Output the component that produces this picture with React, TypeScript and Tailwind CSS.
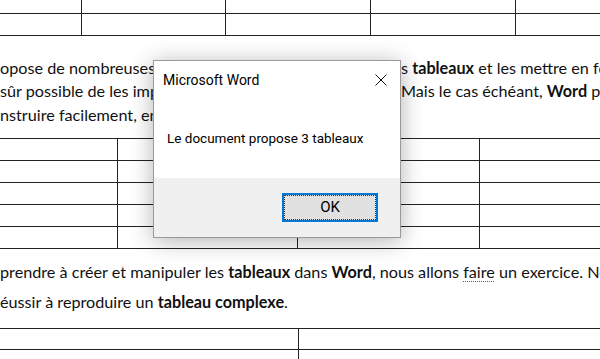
import React from "react";

function Line({ left, right, rightStart = 401 }: { left: React.ReactNode; right?: React.ReactNode; rightStart?: number }) {
  return (
    <div className="flex h-[23.5px] items-center whitespace-nowrap">
      <div className="overflow-hidden" style={{ width: rightStart }}>{left}</div>
      <div className="flex-1 overflow-hidden">{right}</div>
    </div>
  );
}

export default function App() {
  const cell = "border-r border-[#222]";
  return (
    <div className="relative h-[359px] w-[600px] overflow-hidden bg-white font-['Lato',sans-serif] text-[16.2px] text-[#111]">
      {/* top table */}
      <div className="flex flex-col">
        <div className="grid h-[14px] grid-cols-[82px_144px_145px_145px_1fr] border-b border-[#222]">
          <div className={cell} />
          <div className={cell} />
          <div className={cell} />
          <div className={cell} />
          <div />
        </div>
        <div className="grid h-[22px] grid-cols-[82px_144px_145px_145px_1fr] border-b border-[#222]">
          <div className={cell} />
          <div className={cell} />
          <div className={cell} />
          <div className={cell} />
          <div />
        </div>
      </div>

      {/* paragraph 1 */}
      <div className="mt-[20px] flex flex-col">
        <Line
          left={<span>opose de nombreuses fonctionnalités pour créer des</span>}
          right={<span>s <b>tableaux</b> et les mettre en forme</span>}
        />
        <Line
          left={<span>sûr possible de les importer depuis Excel.</span>}
          right={<span>Mais le cas échéant, <b>Word</b> permet</span>}
        />
        <Line left={<span>nstruire facilement, en quelques clics.</span>} />
      </div>

      {/* middle table */}
      <div className="mt-[11px] flex flex-col border-t border-[#222]">
        {[0, 1, 2, 3, 4].map((i) => (
          <div key={i} className="grid h-[22.2px] grid-cols-[118px_180px_182px_1fr] border-b border-[#222]">
            <div className={cell} />
            <div className={cell} />
            <div className={cell} />
            <div />
          </div>
        ))}
      </div>

      {/* paragraph 2 */}
      <div className="mt-[8px] flex flex-col whitespace-nowrap">
        <div className="flex h-[30px] items-center">
          <span>
            prendre à créer et manipuler les <b>tableaux</b> dans <b>Word</b>, nous allons{" "}
            <span className="underline decoration-[#4a4ae8] decoration-dotted decoration-1 underline-offset-[3px]">faire</span> un exercice. Nous
          </span>
        </div>
        <div className="flex h-[30px] items-center">
          <span>
            éussir à reproduire un <b>tableau complexe</b>.
          </span>
        </div>
      </div>

      {/* bottom table */}
      <div className="mt-[11px] flex flex-col border-t border-[#222]">
        {[0, 1].map((i) => (
          <div key={i} className="grid h-[21px] grid-cols-[299px_1fr] border-b border-[#222]">
            <div className={cell} />
            <div />
          </div>
        ))}
      </div>

      {/* dialog */}
      <div className="absolute left-[153px] top-[60px] flex h-[178px] w-[248px] flex-col border border-[#9a9a9a] bg-white font-['Roboto',sans-serif] text-[#000] shadow-[0_3px_22px_rgba(0,0,0,0.3)]">
        <div className="flex h-[38px] items-center justify-between pl-[9px] pr-[13px]">
          <span className="text-[14px]">Microsoft Word</span>
          <svg width="12" height="12" viewBox="0 0 12 12" className="text-[#111]">
            <path d="M0.5 0.5 L11.5 11.5 M11.5 0.5 L0.5 11.5" stroke="currentColor" strokeWidth="1" fill="none" />
          </svg>
        </div>
        <div className="flex h-[79px] items-center pl-[13px] text-[13.5px]">
          Le document propose 3 tableaux
        </div>
        <div className="flex flex-1 items-start justify-end bg-[#f0f0f0] pr-[22px] pt-[15px]">
          <div className="flex h-[29px] w-[96px] items-center justify-center border-2 border-[#0078d7] bg-[#e1e1e1]">
            <div className="flex h-full w-full items-center justify-center border border-dotted border-[#333] text-[15px]">
              OK
            </div>
          </div>
        </div>
      </div>
    </div>
  );
}
